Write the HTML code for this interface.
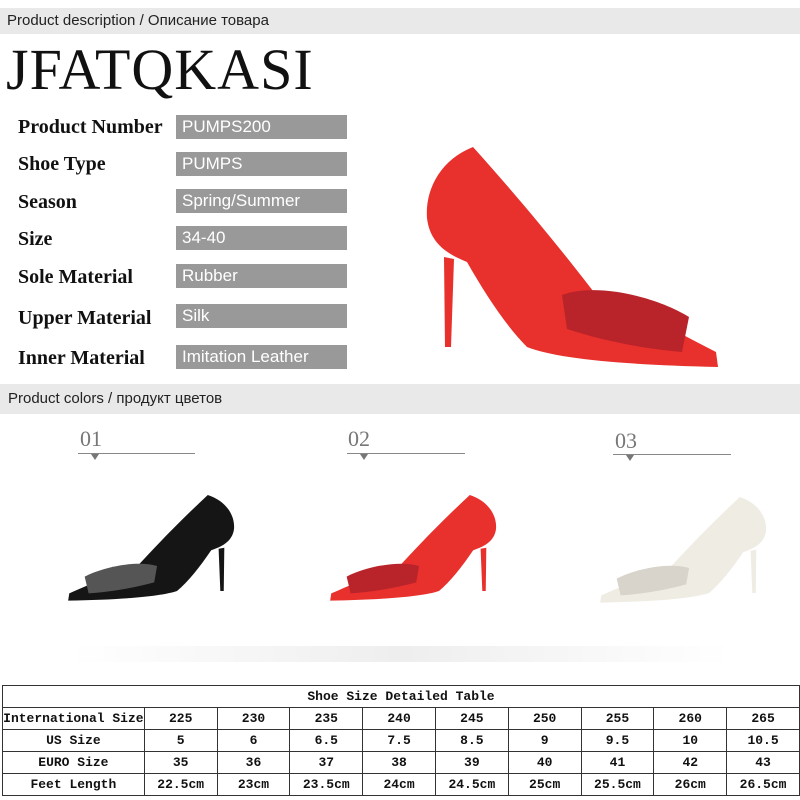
<!DOCTYPE html>
<html><head><meta charset="utf-8"><style>
body{margin:0;width:800px;height:800px;background:#fff;position:relative;overflow:hidden;font-family:"Liberation Sans",sans-serif}
.bar{position:absolute;left:0;width:800px;background:#e9e9e9;color:#222;font-size:15px}
.lab{position:absolute;left:18px;font-family:"Liberation Serif",serif;font-weight:bold;font-size:20px;color:#111}
.val{position:absolute;left:176px;width:171px;height:24px;background:#999;color:#fff;font-size:17px;line-height:24px;padding-left:6px;box-sizing:border-box}
.num{position:absolute;font-family:"Liberation Serif",serif;font-size:22px;color:#777}
.ln{position:absolute;height:1px;background:#888}
.tri{position:absolute;width:0;height:0;border-left:4px solid transparent;border-right:4px solid transparent;border-top:6px solid #777}
table{position:absolute;left:2px;top:685px;border-collapse:collapse;font-family:"Liberation Mono",monospace;font-weight:bold;font-size:13px;color:#111}
td{border:1px solid #333;height:21px;padding:0;text-align:center;width:72px}
td:first-child{width:141px}
</style></head><body>
<div class="bar" style="top:8px;height:26px;line-height:26px;padding-left:7px">Product description / Описание товара</div>
<div style="position:absolute;left:6px;top:36px;font-family:'Liberation Serif',serif;font-size:58px;letter-spacing:1px;color:#111">JFATQKASI</div>
<div class="lab" style="top:116px">Product Number</div><div class="val" style="top:115px">PUMPS200</div>
<div class="lab" style="top:153px">Shoe Type</div><div class="val" style="top:152px">PUMPS</div>
<div class="lab" style="top:191px">Season</div><div class="val" style="top:189px">Spring/Summer</div>
<div class="lab" style="top:228px">Size</div><div class="val" style="top:226px">34-40</div>
<div class="lab" style="top:266px">Sole Material</div><div class="val" style="top:264px">Rubber</div>
<div class="lab" style="top:307px">Upper Material</div><div class="val" style="top:304px">Silk</div>
<div class="lab" style="top:347px">Inner Material</div><div class="val" style="top:345px">Imitation Leather</div>
<div class="bar" style="top:384px;height:30px;line-height:30px;padding-left:8px">Product colors / продукт цветов</div>
<div class="num" style="left:80px;top:426px">01</div><div class="ln" style="left:78px;top:453px;width:117px"></div><div class="tri" style="left:91px;top:454px"></div>
<div class="num" style="left:348px;top:426px">02</div><div class="ln" style="left:347px;top:453px;width:118px"></div><div class="tri" style="left:360px;top:454px"></div>
<div class="num" style="left:615px;top:428px">03</div><div class="ln" style="left:613px;top:454px;width:118px"></div><div class="tri" style="left:626px;top:455px"></div>
<svg width="800" height="800" style="position:absolute;left:0;top:0">
<defs>
<g id="shoe">
<path d="M17,110 L27,112 L24,200 L18,200Z"/>
<path d="M46,0 C13,13 -2,43 0,71 C3,98 23,108 40,115 C60,150 80,180 100,200 C130,212 200,218 291,220 L289,205 C250,185 205,160 173,153 C140,110 100,60 46,0Z"/>
</g>
<linearGradient id="sh" x1="0" x2="1"><stop offset="0" stop-color="#fff"/><stop offset=".5" stop-color="#eee"/><stop offset="1" stop-color="#fff"/></linearGradient>
</defs>
<g transform="translate(427,147)" fill="#e8302c"><use href="#shoe"/><path d="M135,148 C170,135 230,150 262,170 L255,205 C220,202 180,195 140,182Z" fill="#b8242a"/></g>
<g transform="translate(234,495) scale(-0.57,0.48)" fill="#151515"><use href="#shoe"/><path d="M135,148 C170,135 230,150 262,170 L255,205 C220,202 180,195 140,182Z" fill="#555"/></g>
<g transform="translate(496,495) scale(-0.57,0.48)" fill="#e8302c"><use href="#shoe"/><path d="M135,148 C170,135 230,150 262,170 L255,205 C220,202 180,195 140,182Z" fill="#b8242a"/></g>
<g transform="translate(766,497) scale(-0.57,0.48)" fill="#efece4"><use href="#shoe"/><path d="M135,148 C170,135 230,150 262,170 L255,205 C220,202 180,195 140,182Z" fill="#d8d4cc"/></g>
<rect x="72" y="646" width="658" height="16" fill="url(#sh)"/>
</svg>
<table>
<tr><td colspan="10">Shoe Size Detailed Table</td></tr>
<tr><td>International Size</td><td>225</td><td>230</td><td>235</td><td>240</td><td>245</td><td>250</td><td>255</td><td>260</td><td>265</td></tr>
<tr><td>US Size</td><td>5</td><td>6</td><td>6.5</td><td>7.5</td><td>8.5</td><td>9</td><td>9.5</td><td>10</td><td>10.5</td></tr>
<tr><td>EURO Size</td><td>35</td><td>36</td><td>37</td><td>38</td><td>39</td><td>40</td><td>41</td><td>42</td><td>43</td></tr>
<tr><td>Feet Length</td><td>22.5cm</td><td>23cm</td><td>23.5cm</td><td>24cm</td><td>24.5cm</td><td>25cm</td><td>25.5cm</td><td>26cm</td><td>26.5cm</td></tr>
</table>
</body></html>
